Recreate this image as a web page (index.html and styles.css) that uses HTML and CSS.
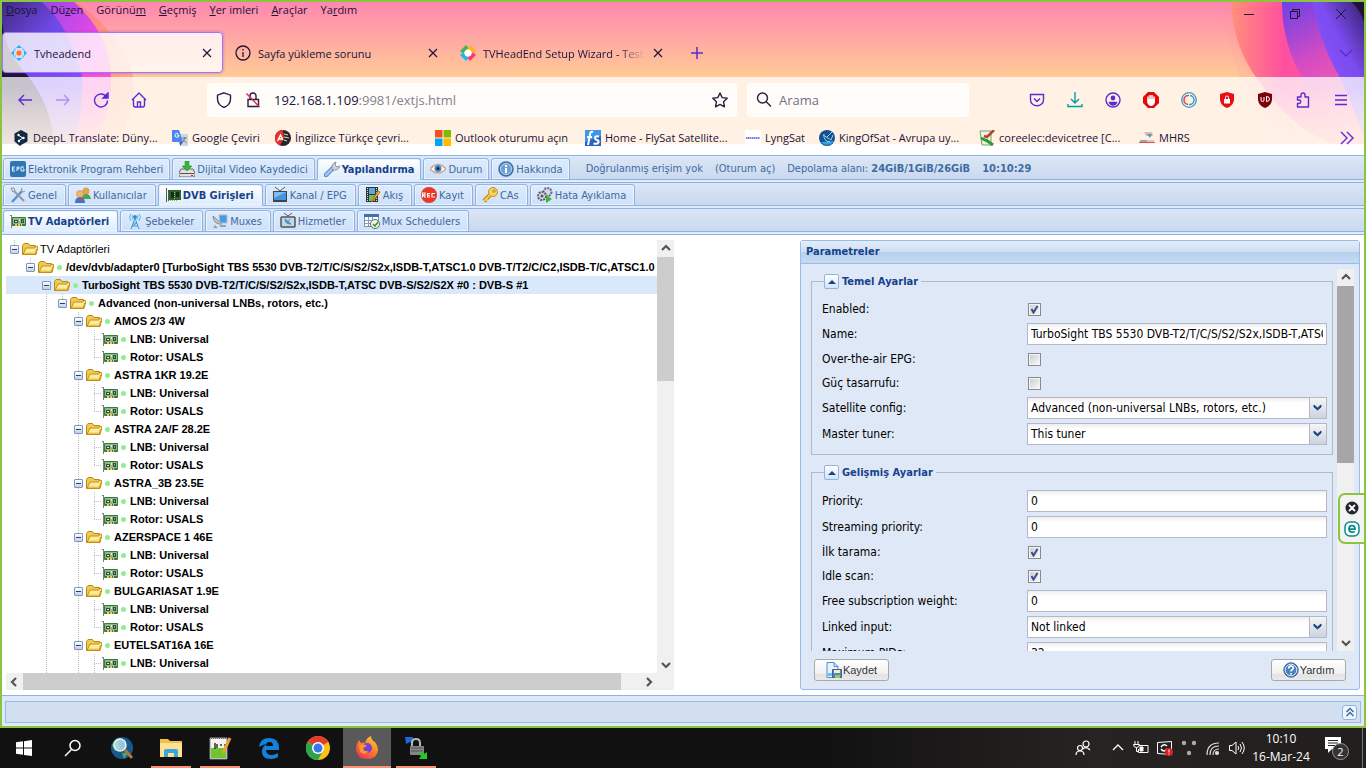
FILE: index.html
```html
<!DOCTYPE html>
<html lang="tr">
<head>
    <meta charset="UTF-8">
    <meta name="viewport" content="width=device-width, initial-scale=1.0">
    <title>Tvheadend</title>
    <link rel="stylesheet" href="styles.css">
</head>
<body>
    <!-- shared icons -->
    <svg class="sprite" aria-hidden="true">
        <symbol id="folder" viewBox="0 0 16 16">
            <path d="M.5 13.500V4.500l1.500-2h4.500l1.500 2h5.500v9z" fill="#f0c94e" stroke="#b8891c"/>
            <path d="M1 13.500L4 7h9V5.500h2.500V8l-1.500 5.500z" fill="#fdec9c" stroke="#c2901a"/>
            <path d="M2 13h11.500M14.500 8L13.500 13" stroke="#c98d12"/>
            <path d="M3 12h10" stroke="#f2c645"/>
        </symbol>
        <symbol id="card" viewBox="0 0 16 16">
            <path d="M0 2.500h2M1.500 2.500V15" stroke="#7d7d7d" fill="none"/>
            <path d="M2.500 4.500h13v8h-13z" fill="#8dbb84" stroke="#2f7f38"/>
            <path d="M4 7h4v3H4zM11 6h3v4h-3z" fill="#3f4743"/>
            <path d="M5 8.500h2M9.500 6v2M12 8h1" stroke="#e4eeda"/>
            <path d="M3 11.500h12" stroke="#3e7c40"/>
            <path d="M5 12h7" stroke="#efc65a" stroke-width="2" stroke-dasharray="2 1"/>
        </symbol>
        <symbol id="close" viewBox="0 0 12 12">
            <path d="M2 2l8 8M10 2l-8 8" fill="none" stroke="currentColor" stroke-width="1.200"/>
        </symbol>
        <symbol id="chev" viewBox="0 0 12 12">
            <path d="M2 8l4-4 4 4" fill="none" stroke="#555" stroke-width="2.200"/>
        </symbol>
    </svg>

    <div class="window">
        <header class="browser">
            <svg class="art art-left" viewBox="0 0 150 142" aria-hidden="true">
                <defs>
                    <linearGradient id="l1" x2="0.600" y2="1"><stop offset="0" stop-color="#3d2a80"/><stop offset=".4" stop-color="#7048e8"/><stop offset="1" stop-color="#8a54ff"/></linearGradient>
                    <linearGradient id="l2" x2="1" y2="1"><stop offset="0" stop-color="#6a48d8"/><stop offset=".4" stop-color="#c848e8"/><stop offset=".6" stop-color="#f84adc"/><stop offset="1" stop-color="#ff6bb0"/></linearGradient>
                    <linearGradient id="l3" x2="1" y2="0"><stop offset="0" stop-color="#ff5a90"/><stop offset=".7" stop-color="#ff8f70"/><stop offset="1" stop-color="#ff9d80"/></linearGradient>
                </defs>
                <path d="M60 0h15Q135 45 132 90Q128 125 112 142H40z" fill="url(#l3)" opacity=".7"/>
                <path d="M0 0H72Q108 32 109 75Q110 115 90 142H0z" fill="url(#l2)"/>
                <path d="M0 0H40Q70 28 80 75Q82 110 70 142H0z" fill="url(#l1)"/>
                <path d="M0 20Q4 52 26 74Q50 105 52 142H0z" fill="#20123a"/>
            </svg>
            <svg class="art art-right" viewBox="0 0 150 142" aria-hidden="true">
                <defs>
                    <linearGradient id="r1" x2="1" y2="0"><stop offset="0" stop-color="#ff907a"/><stop offset=".4" stop-color="#ff4fa0"/><stop offset="1" stop-color="#ff5ca8"/></linearGradient>
                    <linearGradient id="r2" x2="0.300" y2="1"><stop offset="0" stop-color="#6a41e8"/><stop offset=".5" stop-color="#d94cc0"/><stop offset="1" stop-color="#ff6aa8"/></linearGradient>
                    <linearGradient id="r3" x1="1" x2="0.300" y2="1"><stop offset="0" stop-color="#33206a"/><stop offset=".4" stop-color="#7c4cf0"/><stop offset="1" stop-color="#9059ff"/></linearGradient>
                    <linearGradient id="r0" x2="1" y2="0"><stop offset="0" stop-color="#ff7fae" stop-opacity="0"/><stop offset="1" stop-color="#ff6fa8"/></linearGradient>
                </defs>
                <path d="M0 0H22Q28 45 60 90L90 142H50Q20 60 0 0z" fill="url(#r0)" opacity=".4"/>
                <path d="M17 0Q19 45 44 78Q80 130 120 142H150V0z" fill="url(#r1)"/>
                <path d="M68 0Q68 45 92 82Q120 125 150 138V0z" fill="url(#r2)"/>
                <path d="M98 0Q108 45 124 72Q138 100 150 138V0z" fill="url(#r3)"/>
                <path d="M138 0Q146 8 150 20V0z" fill="#20123a"/>
            </svg>

            <nav class="menubar">
                <a href="#"><u>D</u>osya</a>
                <a href="#">Dü<u>z</u>en</a>
                <a href="#">Görünü<u>m</u></a>
                <a href="#"><u>G</u>eçmiş</a>
                <a href="#"><u>Y</u>er imleri</a>
                <a href="#"><u>A</u>raçlar</a>
                <a href="#">Ya<u>r</u>dım</a>
                <div class="win-buttons">
                    <button aria-label="Küçült"><svg width="12" height="12"><path d="M1 6.500h10" stroke="#20123a"/></svg></button>
                    <button aria-label="Geri yükle"><svg width="12" height="12" fill="none" stroke="#20123a"><path d="M1.500 3.500h7v7h-7zM3.500 3.500v-2h7v7h-2"/></svg></button>
                    <button aria-label="Kapat"><svg width="12" height="12" stroke="#20123a"><path d="M1 1l10 10M11 1L1 11"/></svg></button>
                </div>
            </nav>

            <div class="tabs">
                <div class="tab active">
                    <svg width="16" height="16" viewBox="0 0 16 16"><path d="M8 0l3 3H5zM8 16l-3-3h6zM0 8l3-3v6zM16 8l-3 3V5z" fill="#1cb5f5"/><path d="M4.500 2.500l-2 2 2 2M11.500 2.500l2 2-2 2M4.500 13.500l-2-2 2-2M11.500 13.500l2-2-2-2" fill="#5bcdf8"/><circle cx="8" cy="8" r="2.600" fill="#ff7a1a"/></svg>
                    <span class="tab-title">Tvheadend</span>
                    <button aria-label="Sekmeyi kapat"><svg width="12" height="12"><use href="#close"/></svg></button>
                </div>
                <div class="tab">
                    <svg width="16" height="16" viewBox="0 0 16 16" fill="none" stroke="#20123a" stroke-width="1.300"><circle cx="8" cy="8" r="7"/><path d="M8 7v5M8 4v1.500"/></svg>
                    <span class="tab-title">Sayfa yükleme sorunu</span>
                    <button aria-label="Sekmeyi kapat"><svg width="12" height="12"><use href="#close"/></svg></button>
                </div>
                <div class="tab">
                    <svg width="16" height="16" viewBox="0 0 16 16"><path d="M0 6l6-6 2.500 3-5.500 5.500z" fill="#48b05a"/><path d="M10 0l6 6-3 2.500L7.500 3z" fill="#ffb21c"/><path d="M0 10l3-2.500L8.500 13 6 16z" fill="#1cb8f5"/><path d="M16 10l-3-2.500L7.500 13l2.500 3z" fill="#f73a7c"/><circle cx="8" cy="8" r="3.500" fill="#fff"/></svg>
                    <span class="tab-title fade">TVHeadEnd Setup Wizard - Test</span>
                    <button aria-label="Sekmeyi kapat"><svg width="12" height="12"><use href="#close"/></svg></button>
                </div>
                <button class="new-tab" aria-label="Yeni sekme"><svg width="14" height="14" stroke="#5b2bd0" stroke-width="1.500"><path d="M7 1v12M1 7h12"/></svg></button>
                <button class="all-tabs" aria-label="Tüm sekmeler"><svg width="14" height="14" fill="none" stroke="#5b2bd0" stroke-width="1.500"><path d="M1 4l6 6 6-6"/></svg></button>
            </div>

            <div class="navbar">
                <div class="nav-buttons">
                    <button aria-label="Geri"><svg class="line" viewBox="0 0 16 16"><path d="M15 8H2M7 3L2 8l5 5"/></svg></button>
                    <button aria-label="İleri"><svg class="line dim" viewBox="0 0 16 16"><path d="M1 8h13M9 3l5 5-5 5"/></svg></button>
                    <button aria-label="Yenile"><svg class="line" viewBox="0 0 16 16"><path d="M13.500 5A6.500 6.500 0 1 0 14.500 8.500"/><path d="M15 1v5h-5z" fill="#5b2bd0"/></svg></button>
                    <button aria-label="Ana sayfa"><svg class="line" viewBox="0 0 16 16"><path d="M1 8l7-7 7 7M2.500 7v6q0 2 2 2h7q2 0 2-2V7M6.500 15v-5h3v5"/></svg></button>
                </div>
                <div class="urlbar">
                    <svg class="line ink" viewBox="0 0 16 16"><path d="M8 .8l6.500 2.400V7c0 4-3 7-6.500 8.500C4.500 14 1.500 11 1.500 7V3.200z"/></svg>
                    <svg class="line ink" viewBox="0 0 16 16"><path d="M5 7V4a3 3 0 0 1 6 0v3M3 7.500h10.500v7H3z"/><path d="M1.500 1.500l13 13.500" stroke="#e2264d"/></svg>
                    <span class="url" role="textbox" aria-label="Adres">192.168.1.109<span>:9981/extjs.html</span></span>
                    <svg class="line ink" viewBox="0 0 16 16"><path d="M8 1l2.200 4.600 5 .7-3.600 3.500.9 5L8 12.400l-4.500 2.400.9-5L.8 6.300l5-.7z" stroke-linejoin="round"/></svg>
                </div>
                <div class="searchbar">
                    <svg class="line ink" viewBox="0 0 16 16"><circle cx="6.500" cy="6" r="5"/><path d="M10 9.500l5 5"/></svg>
                    <input type="text" placeholder="Arama" aria-label="Arama">
                </div>
                <div class="ext-buttons">
                    <button aria-label="Pocket"><svg class="line" viewBox="0 0 16 16"><path d="M1.500 2.500h13V8a6.500 5.800 0 0 1-13 0zM5 6.500L8 9.500l3-3"/></svg></button>
                    <button aria-label="İndirilenler"><svg class="line teal" viewBox="0 0 16 16"><path d="M8 0v10.500M4 7l4 4 4-4M1 12v2.500h14V12"/></svg></button>
                    <button aria-label="Hesap"><svg class="line" viewBox="0 0 16 16"><circle cx="8" cy="8" r="7"/><circle cx="8" cy="6" r="1.700" fill="#5b2bd0"/><path d="M4.500 10.500h7q-1 2.500-3.500 2.500t-3.500-2.500z" fill="#5b2bd0"/></svg></button>
                    <button aria-label="Engelleyici"><svg viewBox="0 0 16 16"><path d="M5 0h6l5 5v6l-5 5H5l-5-5V5z" fill="#e20a0a"/><path d="M5 8V4.500M7 8V3M9 8V3M11 9V4.500" stroke="#fff" stroke-width="1.500"/><path d="M4.500 7h7.500v3q-1 4-4 4-2.500 0-4-4z" fill="#fff"/></svg></button>
                    <button aria-label="Eklenti"><svg viewBox="0 0 16 16" fill="none"><circle cx="8" cy="8" r="7.300" stroke="#3b9cc9" stroke-width="1.300"/><path d="M8 3.500a4.500 4.500 0 0 0-1 9" stroke="#e04440" stroke-width="1.600"/><path d="M9 3.500a4.500 4.500 0 0 1-1 9" stroke="#3b9cc9" stroke-width="1.600"/></svg></button>
                    <button aria-label="Kalkan"><svg viewBox="0 0 16 16"><path d="M8 0l7 2v6q-1 6-7 8-6-2-7-8V2z" fill="#ea0f12"/><path d="M5 7h6v4.500H5z" fill="#fff"/><path d="M6.500 7V5.500a1.500 1.500 0 0 1 3 0V7" stroke="#fff" fill="none"/></svg></button>
                    <button aria-label="uBlock"><svg viewBox="0 0 16 16"><path d="M8 0l7 2v6q-1 6-7 8-6-2-7-8V2z" fill="#7c0008"/><path d="M4 5v3q0 1.500 1.500 1.500T7 8V5M9.500 4.500v5q3 0 3-2.500t-3-2.500" stroke="#fff" fill="none"/></svg></button>
                    <button aria-label="Uzantılar"><svg class="line" viewBox="0 0 16 16"><path d="M2.500 5H6V3a2 2 0 0 1 4 0v2h3.500v10h-11v-3.500H4a1.700 1.700 0 0 0 0-3.500H2.500z" stroke-linejoin="round"/></svg></button>
                    <button aria-label="Menü"><svg class="line" viewBox="0 0 16 16"><path d="M2 3.500h12M2 8h12M2 12.500h12"/></svg></button>
                </div>
            </div>

            <div class="bookmarks">
                <a href="#"><svg viewBox="0 0 16 16"><path d="M8 0l6.500 3.500v8L8 15l-1 1-5.500-4.500v-8z" fill="#0f2b46"/><path d="M5 5l5 3-4 2.500" stroke="#fff" fill="none"/><circle cx="5.500" cy="5" r="1.200" fill="#fff"/><circle cx="10.500" cy="8" r="1.200" fill="#fff"/><circle cx="6" cy="11" r="1.200" fill="#fff"/></svg><span>DeepL Translate: Düny...</span></a>
                <a href="#"><svg viewBox="0 0 16 16"><path d="M6 4h10v12H8z" fill="#cfd6dc"/><path d="M0 0h7l4 12H1q-1 0-1-1z" fill="#4a86f0"/><path d="M7.500 12H11l-3 4z" fill="#2f5bc0"/><path d="M7 5H5M7 5a2 2 0 1 1-1-1.500" stroke="#fff" fill="none"/><path d="M10 8h5M12.500 7v1q0 3-2.500 5M11 9.500l3.500 3.500" stroke="#667f92" fill="none"/></svg><span>Google Çeviri</span></a>
                <a href="#"><svg viewBox="0 0 16 16"><circle cx="8" cy="8" r="8" fill="#262626"/><path d="M8 0a8 8 0 0 0-3 15.500L9 8z" fill="#e5322d"/><path d="M2.500 11l3-6 2.500 5M3.500 9h4" stroke="#fff" fill="none" stroke-width="1.400"/><path d="M9 4l4 1M9 7l5 1M9 10l3 1" stroke="#ddd"/></svg><span>İngilizce Türkçe çevri...</span></a>
                <a href="#"><svg viewBox="0 0 16 16"><path d="M0 0h7.500v7.500H0z" fill="#f25022"/><path d="M8.500 0H16v7.500H8.500z" fill="#7fba00"/><path d="M0 8.500h7.500V16H0z" fill="#00a4ef"/><path d="M8.500 8.500H16V16H8.500z" fill="#ffb900"/></svg><span>Outlook oturumu açın</span></a>
                <a href="#"><svg viewBox="0 0 16 16"><path d="M0 0h16v16H0z" fill="#2d62c4"/><path d="M0 0h16v6L0 12z" fill="#3c97e8"/><path d="M8 2Q5 1 5 5L3 15M2 7h5M14 6.500q-4-1-4 1.500 0 1.500 2 2t1.500 2.500q-1 2-5 1" stroke="#fff" stroke-width="2" fill="none"/></svg><span>Home - FlySat Satellite...</span></a>
                <a href="#"><svg viewBox="0 0 16 16"><path d="M0 0h16v16H0z" fill="#fff"/><path d="M1 8h14" stroke="#7676e8" stroke-width="2" stroke-dasharray="1.500 .5"/></svg><span>LyngSat</span></a>
                <a href="#"><svg viewBox="0 0 16 16"><circle cx="8" cy="8" r="8" fill="#11518f"/><path d="M2 12a8 8 0 0 0 13-1" fill="#2ba4e0"/><path d="M5 4q-1 7 6 8M4 5l8 5 2-5M8 7l5-5" stroke="#9ed2f0" fill="none"/></svg><span>KingOfSat - Avrupa uy...</span></a>
                <a href="#"><svg viewBox="0 0 16 16"><path d="M1 1h11v14H3z" fill="#eef3e2" stroke="#7b9c73"/><path d="M15 0L8 7l-3-1" stroke="#b5432c" stroke-width="2.500" fill="none"/><path d="M2 8l6 3M7 10l7 5" stroke="#2c9b32" stroke-width="3"/></svg><span>coreelec:devicetree [C...</span></a>
                <a href="#"><svg viewBox="0 0 16 16"><path d="M5 2h8l1 4H7z" fill="#e9b6b6"/><path d="M8 4h5l-2 4z" fill="#45a7a0"/><path d="M3 10h12v2H2z" fill="#e3c4c4"/><path d="M0 12h16v1H0z" fill="#d5565a"/><path d="M1 10h7v2H1z" fill="#9aa6ad"/></svg><span>MHRS</span></a>
                <button class="more" aria-label="Daha fazla yer imi"><svg class="line" viewBox="0 0 16 16"><path d="M2 2l6 6-6 6M8 2l6 6-6 6"/></svg></button>
            </div>
        </header>

        <div class="app">
            <div class="strip strip-top">
                <button class="xtab"><svg viewBox="0 0 16 16"><rect width="16" height="16" rx="2" fill="#2f74b5"/><path d="M2 6h3M2 8h2.500M2 10h3M2.500 6v4M7 10V6h2v2H7M14 6h-3v4h3V8h-1" stroke="#e8f3ff" fill="none"/></svg>Elektronik Program Rehberi</button>
                <button class="xtab"><svg viewBox="0 0 16 16"><path d="M2 8h12l2 4v4H0v-4z" fill="#e0e0e0" stroke="#666"/><path d="M1 12.500h14" stroke="#555"/><path d="M12 14.500h2" stroke="#e22"/><path d="M6 0h4v5h3L8 10 3 5h3z" fill="#35b535" stroke="#1c861c" stroke-width=".5"/></svg>Dijital Video Kaydedici</button>
                <button class="xtab active"><svg viewBox="0 0 16 16"><path d="M2 14l7-7" stroke="#4f7fc4" stroke-width="4.500" stroke-linecap="round"/><path d="M2 14l7-7" stroke="#a6c5ef" stroke-width="2.500" stroke-linecap="round"/><path d="M8 8q-1-5 4-7l-1 3 2 2 3-1q-2 5-7 4z" fill="#ccd3dc" stroke="#78828f" stroke-width=".8"/></svg>Yapılandırma</button>
                <button class="xtab"><svg viewBox="0 0 16 16"><path d="M0 8q8-9 16 0-8 8-16 0z" fill="#fff" stroke="#d3a383" stroke-width="1.500"/><circle cx="8" cy="7.500" r="3.500" fill="#4a86c8"/><circle cx="8" cy="7.500" r="1.500" fill="#152540"/></svg>Durum</button>
                <button class="xtab"><svg viewBox="0 0 16 16"><circle cx="8" cy="8" r="7" fill="#6aa0d8" stroke="#3d6ea8" stroke-width="1.500"/><circle cx="8" cy="8" r="5.500" stroke="#c9def2" fill="none" stroke-width=".8"/><path d="M8 7v5M8 4v2" stroke="#fff" stroke-width="2"/></svg>Hakkında</button>
                <div class="session">
                    <span>Doğrulanmış erişim yok</span>
                    <a href="#">(Oturum aç)</a>
                    <span>Depolama alanı: <b>24GiB/1GiB/26GiB</b></span>
                    <b>10:10:29</b>
                </div>
            </div>
            <div class="strip">
                <button class="xtab"><svg viewBox="0 0 16 16"><path d="M2 15L13 3" stroke="#5b8fd0" stroke-width="2.500"/><path d="M2 2l12 12" stroke="#929ba6" stroke-width="2"/><path d="M1 1l3 0 1 3-2 1zM12 1q-2 3 1 4l2-1" fill="#dde2e8" stroke="#8c95a0"/></svg>Genel</button>
                <button class="xtab"><svg viewBox="0 0 16 16"><circle cx="11" cy="4" r="3.500" fill="#dfa15a"/><path d="M7 12q0-5 4-5t5 5z" fill="#52a352"/><circle cx="5" cy="7" r="3.500" fill="#eeb66f" stroke="#c27e33" stroke-width=".5"/><path d="M0 16q0-6 5-6t5 6z" fill="#3d79c8"/><path d="M4 11l1 4 2-4" fill="#e33"/></svg>Kullanıcılar</button>
                <button class="xtab active"><svg viewBox="0 0 16 16"><path d="M1.500 1v14M3.500 3v11" stroke="#555"/><path d="M4 3h12v10H4z" fill="#2b612c"/><path d="M6 5h3v6H6zM11 5h3v5h-3z" fill="#152c18"/><path d="M5 13.500h8" stroke="#cfa336" stroke-dasharray="1 1"/><path d="M9.500 5v7" stroke="#8cc287" stroke-dasharray="1 1"/></svg>DVB Girişleri</button>
                <button class="xtab"><svg viewBox="0 0 16 16"><path d="M3 0l5 4 5-4" stroke="#555" fill="none"/><rect x="1" y="4" width="14" height="11" fill="#444"/><path d="M2 5h12v8H2z" fill="#4396e0"/><path d="M2 5h12L2 11z" fill="#80bdf3"/></svg>Kanal / EPG</button>
                <button class="xtab"><svg viewBox="0 0 16 16"><path d="M1 0h12v15H1z" fill="#333"/><path d="M4 1h6v6H4z" fill="#5fa7dc"/><path d="M4 8h6v6H4z" fill="#73ba66"/><path d="M2.500 1v14M11.500 1v14" stroke="#ddd" stroke-dasharray="1 1"/><path d="M15 5l-6 8-2 2 1-3 5-8z" fill="#f2b53d" stroke="#a8701c"/></svg>Akış</button>
                <button class="xtab"><svg viewBox="0 0 16 16"><circle cx="8" cy="8" r="8" fill="#e93823"/><path d="M1.500 10.500V6H4v2H2l2.500 2.500M9 6.500H6.500v3.500H9M6.500 8.200H9M14 6.500h-3v3.500h3" stroke="#fff" fill="none" stroke-width="1.100"/></svg>Kayıt</button>
                <button class="xtab"><svg viewBox="0 0 16 16"><path d="M8 8L2 14" stroke="#b17b12" stroke-width="4"/><circle cx="11" cy="5" r="4.500" fill="#f9d55c" stroke="#c3901d"/><path d="M9 7l-7 7M4 12l2 2" stroke="#f6cd4f" stroke-width="2"/><circle cx="12" cy="4" r="1.200" fill="#fff" stroke="#b17b12"/></svg>CAs</button>
                <button class="xtab"><svg viewBox="0 0 16 16"><circle cx="10.500" cy="5" r="4" fill="#d6d6e4" stroke="#686b80" stroke-width="2" stroke-dasharray="2 1"/><circle cx="5" cy="9" r="4" fill="#d6d6e4" stroke="#585b70" stroke-width="2" stroke-dasharray="2 1"/><circle cx="5" cy="9" r="1.500" fill="#555"/><path d="M9 8l6 4-6 4z" fill="#34b82e"/></svg>Hata Ayıklama</button>
            </div>
            <div class="strip">
                <button class="xtab active"><svg viewBox="0 0 16 16"><use href="#card"/></svg>TV Adaptörleri</button>
                <button class="xtab"><svg viewBox="0 0 16 16" fill="none" stroke="#3a9bd6"><path d="M4 16L8 5l4 11M5 13h6M6 10h4M5 13l5-3"/><path d="M4 1Q1 4 4 8M12 1q3 3 0 7M6 2Q4 4 6 6.500M10 2q2 2 0 4.500" stroke="#57b6e6"/><circle cx="8" cy="4" r="1.500" fill="#2b80bd"/></svg>Şebekeler</button>
                <button class="xtab"><svg viewBox="0 0 16 16"><path d="M1 3Q2 12 10 11z" fill="#c0c7cf" stroke="#7f8790"/><path d="M7 2h8v8H8z" fill="#3f9ce8" stroke="#bbb"/><path d="M3 12l-2 3h5zM8 12h6v2H8z" fill="#98a1ab"/></svg>Muxes</button>
                <button class="xtab"><svg viewBox="0 0 16 16"><path d="M4 0l4 3 4-3" fill="none" stroke="#555"/><rect x="1" y="4" width="14" height="10" rx="1" fill="#cbd5de" stroke="#4b555e" stroke-width="1.500"/><path d="M5 6q0 5 6 5zM8 9l2-3" fill="#3f8fce" stroke="#3f8fce"/></svg>Hizmetler</button>
                <button class="xtab"><svg viewBox="0 0 16 16"><path d="M.5 1.500h14v12H.5z" fill="#fff" stroke="#7890b0"/><path d="M0 1h15v3H0z" fill="#3972b8"/><path d="M1 7.500h13M1 10.500h13M4.500 4v9M8.500 4v9" stroke="#8a9cb5"/><circle cx="11" cy="11" r="4.500" fill="#f0f7ee" stroke="#667"/><path d="M9 11l2 2 3-4" stroke="#28a028" stroke-width="1.500" fill="none"/></svg>Mux Schedulers</button>
            </div>

            <main class="content">
                <section class="tree-panel">
                    <div class="tree-view">
                        <ul class="tree">
                            <li class="last">
                                <div class="row root"><button class="minus" aria-label="Daralt"></button><svg><use href="#folder"/></svg>TV Adaptörleri</div>
                                <ul>
                                    <li class="last">
                                        <div class="row"><button class="minus" aria-label="Daralt"></button><svg><use href="#folder"/></svg><i></i>/dev/dvb/adapter0 [TurboSight TBS 5530 DVB-T2/T/C/S/S2/S2x,ISDB-T,ATSC1.0 DVB-T/T2/C/C2,ISDB-T/C,ATSC1.0 #0]</div>
                                        <ul>
                                            <li>
                                                <div class="row selected"><button class="minus" aria-label="Daralt"></button><svg><use href="#folder"/></svg><i></i>TurboSight TBS 5530 DVB-T2/T/C/S/S2/S2x,ISDB-T,ATSC DVB-S/S2/S2X #0 : DVB-S #1</div>
                                                <ul>
                                                    <li class="last">
                                                        <div class="row"><button class="minus" aria-label="Daralt"></button><svg><use href="#folder"/></svg><i></i>Advanced (non-universal LNBs, rotors, etc.)</div>
                                                        <ul id="satellites"></ul>
                                                    </li>
                                                </ul>
                                            </li>
                                        </ul>
                                    </li>
                                </ul>
                            </li>
                        </ul>
                    </div>
                    <div class="vscroll" aria-hidden="true">
                        <svg width="12" height="12"><use href="#chev"/></svg>
                        <div class="track"><div class="thumb"></div></div>
                        <svg class="down" width="12" height="12"><use href="#chev"/></svg>
                    </div>
                    <div class="hscroll" aria-hidden="true">
                        <svg class="left" width="12" height="12"><use href="#chev"/></svg>
                        <div class="track"><div class="thumb"></div></div>
                        <svg class="right" width="12" height="12"><use href="#chev"/></svg>
                    </div>
                    <div class="corner"></div>
                </section>

                <section class="params">
                    <h2>Parametreler</h2>
                    <div class="params-body">
                        <form class="fields">
                            <fieldset>
                                <legend><button type="button" class="collapse" aria-label="Daralt"></button>Temel Ayarlar</legend>
                                <div class="field check"><label for="enabled">Enabled:</label><input type="checkbox" id="enabled" checked></div>
                                <div class="field"><label for="name">Name:</label><input type="text" id="name" value="TurboSight TBS 5530 DVB-T2/T/C/S/S2/S2x,ISDB-T,ATSC DVB-S/S2/S2X #0"></div>
                                <div class="field check"><label for="epg">Over-the-air EPG:</label><input type="checkbox" id="epg"></div>
                                <div class="field check"><label for="power">Güç tasarrufu:</label><input type="checkbox" id="power"></div>
                                <div class="field"><label for="satconf">Satellite config:</label><select id="satconf"><option>Advanced (non-universal LNBs, rotors, etc.)</option></select></div>
                                <div class="field"><label for="master">Master tuner:</label><select id="master"><option>This tuner</option></select></div>
                            </fieldset>
                            <fieldset>
                                <legend><button type="button" class="collapse" aria-label="Daralt"></button>Gelişmiş Ayarlar</legend>
                                <div class="field"><label for="prio">Priority:</label><input type="text" id="prio" value="0"></div>
                                <div class="field"><label for="sprio">Streaming priority:</label><input type="text" id="sprio" value="0"></div>
                                <div class="field check"><label for="initscan">İlk tarama:</label><input type="checkbox" id="initscan" checked></div>
                                <div class="field check"><label for="idlescan">Idle scan:</label><input type="checkbox" id="idlescan" checked></div>
                                <div class="field"><label for="weight">Free subscription weight:</label><input type="text" id="weight" value="0"></div>
                                <div class="field"><label for="linked">Linked input:</label><select id="linked"><option>Not linked</option></select></div>
                                <div class="field"><label for="pids">Maximum PIDs:</label><input type="text" id="pids" value="32"></div>
                            </fieldset>
                        </form>
                        <div class="vscroll dark" aria-hidden="true">
                            <svg width="12" height="12"><use href="#chev"/></svg>
                            <div class="track"><div class="thumb"></div></div>
                            <svg class="down" width="12" height="12"><use href="#chev"/></svg>
                        </div>
                    </div>
                    <footer class="params-foot">
                        <button class="btn"><svg width="16" height="16" viewBox="0 0 16 16"><path d="M1 .5h7l4 4v11H1z" fill="#e8f2fd" stroke="#4f8bd0"/><path d="M8 .5v4h4" fill="none" stroke="#4f8bd0"/><path d="M2 11h4v3H2z" fill="#6fc0ef"/><path d="M6.500 7.500h9v8h-9z" fill="#5a83c4" stroke="#3b5f9c"/><path d="M8 8h6v3H8z" fill="#f5efb0"/><path d="M9 13h5v3H9z" fill="#8fd05c"/></svg>Kaydet</button>
                        <button class="btn"><svg width="16" height="16" viewBox="0 0 16 16"><circle cx="8" cy="8" r="7.200" fill="#4f80be" stroke="#35629e"/><circle cx="8" cy="8" r="5.800" fill="none" stroke="#d6e4f4"/><path d="M5.700 6.500q0-2.500 2.300-2.500t2.300 2q0 1-1.200 1.700T8 9.500M8 11v1.500" fill="none" stroke="#fff" stroke-width="1.600"/></svg>Yardım</button>
                    </footer>
                </section>
            </main>

            <div class="statusbar">
                <div class="status-inner"><button aria-label="Genişlet"><svg width="10" height="10" fill="none" stroke="#3b6aab" stroke-width="1.500"><path d="M1.500 5L5 1.500 8.500 5M1.500 9L5 5.500 8.500 9"/></svg></button></div>
            </div>
        </div>
    </div>

    <div class="widget">
        <svg width="14" height="14" viewBox="0 0 14 14"><circle cx="7" cy="7" r="6.500" fill="#22252b"/><path d="M4 4l6 6M10 4l-6 6" stroke="#fff" stroke-width="1.800"/></svg>
        <svg width="16" height="16" viewBox="0 0 16 16"><rect x="1" y="1" width="14" height="14" rx="5" fill="#fff" stroke="#0b8a8f" stroke-width="1.500"/><path d="M4.500 8.200h6.500q0-3.500-3-3.500T5 8q0 3.200 3.200 3.200 1.500 0 2.500-.8" fill="none" stroke="#0b8a8f" stroke-width="1.800"/></svg>
    </div>

    <div class="taskbar">
        <button class="task" aria-label="Başlat"><svg width="16" height="16" fill="#fff"><path d="M0 2.300l7-1v6.300H0zM8 1.200L16 0v7.600H8zM0 8.500h7v6.300l-7-1zM8 8.500h8V16l-8-1.100z"/></svg></button>
        <button class="task" aria-label="Ara"><svg width="18" height="18" fill="none" stroke="#fff" stroke-width="1.500"><circle cx="11" cy="6.500" r="5"/><path d="M7.500 10.500L1 17"/></svg></button>
        <button class="task" aria-label="Tarayıcı"><svg width="24" height="24"><circle cx="12" cy="12" r="11" fill="#17598c"/><path d="M2 9q4-8 9-7l-3 6 2 4-5 3zM12 17l7-1-5 7z" fill="#4ba567"/><circle cx="10" cy="9" r="6" fill="#c9e8f8" fill-opacity=".75" stroke="#e9f1f5" stroke-width="1.500"/><path d="M15 14l7 8" stroke="#b5753a" stroke-width="3"/></svg></button>
        <button class="task open" aria-label="Dosya Gezgini"><svg width="22" height="20"><path d="M0 1h8l2 2h12v16H0z" fill="#f0c04e"/><path d="M0 5h22v14H0z" fill="#fde291"/><path d="M4 19v-6q0-2 2-2h10q2 0 2 2v6h-4v-4H8v4z" fill="#39a6df"/></svg></button>
        <button class="task open" aria-label="Notepad++"><svg width="24" height="24"><path d="M2 2h17v21H2z" fill="#f2f4ee" stroke="#889"/><path d="M3 12h15v10H3z" fill="#6fc62c"/><path d="M3 2h15" stroke="#666" stroke-width="2" stroke-dasharray="1 1"/><path d="M7 7v6M9 8v4M12 9h2M16 9h2" stroke="#333" stroke-width="1.500"/><path d="M22 2l-7 15" stroke="#e6a13a" stroke-width="3"/></svg></button>
        <button class="task" aria-label="Edge"><svg width="22" height="22"><path d="M1 10Q2 1 11 1q10 0 10 10v2H8q0 5 6 5 3 0 6-2v4q-3 2-7 2-10 0-9-9 1-4 5-6-3 0-8 3zM8 9h7q0-4-3.500-4T8 9z" fill="#1380db"/></svg></button>
        <button class="task" aria-label="Chrome"><svg width="24" height="24"><circle cx="12" cy="12" r="12" fill="#fbc116"/><path d="M12 12L1.600 6A12 12 0 0 1 22.400 6z" fill="#e33b2e"/><path d="M1.600 6A12 12 0 0 0 12 24l5-9-5-3z" fill="#2da44f"/><circle cx="12" cy="12" r="6" fill="#fff"/><circle cx="12" cy="12" r="4.500" fill="#3978e8"/></svg></button>
        <button class="task open current" aria-label="Firefox"><svg width="24" height="24"><defs><linearGradient id="ff" x1="1" x2="0.300" y2="1"><stop offset="0" stop-color="#ffe044"/><stop offset=".5" stop-color="#ff8425"/><stop offset="1" stop-color="#f0365a"/></linearGradient></defs><path d="M4 4l2 3q2-1 4 0 1-5 6-7 0 4 4 6 3 4 3 8-1 9-11 9Q2 23 1 13q0-5 3-9z" fill="url(#ff)"/><circle cx="12" cy="12" r="5" fill="#7541d8"/><path d="M4 9q5-2 8 1l-4 2q1 4 6 3-4 5-9 1z" fill="#ff9a25"/></svg></button>
        <button class="task open" aria-label="WinSCP"><svg width="24" height="24"><path d="M1 1h8v8L6 6 2 8z" fill="#1d65d8"/><rect x="6" y="10" width="14" height="9" rx="1" fill="#868686"/><path d="M8 10V7q0-4 4-4t4 4v3" fill="none" stroke="#b5b5b5" stroke-width="2"/><path d="M7 12h12M7 15h12" stroke="#555"/><path d="M23 23h-8l2-3-3-3 3-2 3 3 3-2z" fill="#2cc42c"/></svg></button>
        <div class="tray">
            <svg width="16" height="16" fill="none" stroke="#fff" stroke-width="1.200"><circle cx="11" cy="4" r="3"/><path d="M8 9q3-3 7 1"/><circle cx="5" cy="8" r="2.500"/><path d="M1 15q0-4 4-4t4 4"/></svg>
            <svg class="up" width="14" height="14" fill="none" stroke="#fff" stroke-width="1.300"><path d="M2 9l5-5 5 5"/></svg>
            <svg width="16" height="16" fill="none" stroke="#fff"><path d="M6 5.500h9v7H5.500V9M2 1v3M5 1v3M.5 4.500h6q0 3-3 3t-3-3M3.500 7.500v4H6"/><path d="M7 7h3v4H7z" fill="#fff"/></svg>
            <svg width="16" height="16" fill="none" stroke="#fff"><path d="M.5 2.500l14-1v13l-14-1z"/><path d="M4 7q3-4 6-1M10 9q-3 4-6 0" stroke-width="1.500"/><circle cx="12" cy="12" r="4" fill="#d91f26" stroke="none"/><path d="M12 9.500v3M12 13.500v1"/></svg>
            <svg width="16" height="16" fill="#aaa"><circle cx="3" cy="3" r="2.200"/><circle cx="13" cy="3" r="2.200"/><circle cx="8" cy="13" r="2.200"/></svg>
            <svg width="16" height="16" fill="none" stroke="#ddd" stroke-width="1.200"><path d="M2 15Q2 3 14 3M5 15q0-9 9-9M8 15q0-6 6-6"/><circle cx="12" cy="13" r="1.500" fill="#ddd"/></svg>
            <svg width="16" height="16" fill="none" stroke="#fff"><path d="M.5 5.500H3L7 2v12l-4-3.500H.5zM9 6q1.500 2 0 4M11 4q3 4 0 8M13 2q4.500 6 0 12"/></svg>
            <div class="clock"><span>10:10</span><span>16-Mar-24</span></div>
            <div class="notify"><svg width="16" height="16" viewBox="0 0 16 16"><path d="M0 0h16v12H7l-4 4v-4H0z" fill="#fff"/><path d="M3 3.500h10M3 6h10M3 8.500h7" stroke="#222"/></svg><span>2</span></div>
            <div class="desktop"></div>
        </div>
    </div>

    <script>
        const satellites = ['AMOS 2/3 4W', 'ASTRA 1KR 19.2E', 'ASTRA 2A/F 28.2E', 'ASTRA_3B 23.5E', 'AZERSPACE 1 46E', 'BULGARIASAT 1.9E', 'EUTELSAT16A 16E'];

        const leaf = (text, cls) => `<li class="${cls}"><div class="row"><span class="elbow"></span><svg><use href="#card"/></svg><i></i>${text}</div></li>`;

        document.getElementById('satellites').innerHTML = satellites.map(name => `
            <li>
                <div class="row"><button class="minus" aria-label="Daralt"></button><svg><use href="#folder"/></svg><i></i>${name}</div>
                <ul>${leaf('LNB: Universal', '')}${leaf('Rotor: USALS', 'last')}</ul>
            </li>`).join('');
    </script>
</body>
</html>
```
FILE: styles.css
```css
* { box-sizing: border-box; }

body {
    margin: 0;
    height: 100vh;
    display: flex;
    flex-direction: column;
    overflow: hidden;
    font-family: "Open Sans", "Noto Sans", sans-serif;
    font-size: 11px;
    color: #20123a;
    background: #fff;
}

button {
    border: 0;
    padding: 0;
    background: none;
    font: inherit;
    color: inherit;
    display: inline-flex;
    align-items: center;
    justify-content: center;
}

a { color: inherit; text-decoration: none; }
svg { flex: none; display: block; }
.sprite { position: absolute; width: 0; height: 0; }

.window {
    flex: 1;
    min-height: 0;
    display: flex;
    flex-direction: column;
    border: 2px solid #8bc53f;
}

/* browser chrome */
.browser {
    position: relative;
    background: linear-gradient(to bottom, #ff87b0 0, #ffcb96 75px);
}
.art {
    position: absolute;
    top: 0;
    width: 150px;
    height: 142px;
    mask-image: linear-gradient(to bottom, #000 85px, rgba(0, 0, 0, 0.25));
}
.art-left { left: 0; }
.art-right { right: 0; }
.menubar, .tabs, .navbar, .bookmarks { position: relative; display: flex; align-items: center; }

.menubar { height: 30px; padding-left: 4px; gap: 13px; align-items: flex-start; line-height: 16px; }
.win-buttons { margin-left: auto; display: flex; }
.win-buttons button { width: 46px; height: 24px; }

.tabs { height: 45px; align-items: flex-start; }
.tab {
    width: 221px;
    height: 41px;
    margin-right: 4px;
    padding: 0 9px 0 8px;
    display: flex;
    align-items: center;
    gap: 7px;
    border-radius: 4px;
}
.tab.active {
    background: rgba(255, 255, 255, 0.8);
    border: 1px solid #a173ff;
    box-shadow: 0 0 3px rgba(120, 60, 200, 0.5);
}
.tab-title { flex: 1; padding-top: 2px; overflow: hidden; white-space: nowrap; }
.fade { mask-image: linear-gradient(to left, transparent, #000 26px); }
.new-tab, .all-tabs { width: 36px; height: 41px; }
.new-tab { margin-left: 2px; }
.all-tabs { margin-left: auto; }

.navbar { height: 46px; padding: 0 4px; background: rgba(255, 255, 255, 0.75); }
.nav-buttons, .ext-buttons { display: flex; }
.nav-buttons button, .ext-buttons button { width: 38px; height: 34px; }
.navbar svg, .bookmarks svg { width: 16px; height: 16px; }
.line { fill: none; stroke: #5b2bd0; stroke-width: 1.4; }
.ink { stroke: #2b1d45; }
.teal { stroke: #00a0a4; }
.dim { opacity: 0.4; }
.urlbar, .searchbar {
    height: 34px;
    display: flex;
    align-items: center;
    background: rgba(255, 255, 255, 0.8);
    border-radius: 4px;
    font-size: 13px;
}
.urlbar { flex: 1; margin-left: 49px; padding: 0 9px; gap: 13px; }
.url { flex: 1; }
.url span { color: #857f90; }
.searchbar { width: 222px; margin: 0 49px 0 10px; padding: 0 9px; gap: 5px; }
.searchbar input {
    flex: 1;
    min-width: 0;
    border: 0;
    background: none;
    font: inherit;
    outline: 0;
}
.searchbar input::placeholder { color: #756f82; }

.bookmarks {
    height: 21px;
    padding: 7px 9px 0 11px;
    display: grid;
    align-items: start;
    grid-template-columns: 159px 103px 160px 150px 160px 74px 160px 160px 1fr 16px;
    background: rgba(255, 255, 255, 0.75);
}
.bookmarks a { display: flex; gap: 4px; white-space: nowrap; }
.bookmarks a span { line-height: 16px; }

/* web app */
.app {
    flex: 1;
    min-height: 0;
    padding-top: 11px;
    display: flex;
    flex-direction: column;
    background: #fff;
    font-family: "DejaVu Sans Condensed", "DejaVu Sans", Tahoma, sans-serif;
    font-size: 11px;
    color: #000;
}
.strip {
    display: flex;
    height: 26px;
    padding: 1px 1px 0;
    gap: 2px;
    border-top: 1px solid #8db2e3;
    background: linear-gradient(to bottom, #dbe6f5, #c9d9ee 22px, #8db2e3 22px, #8db2e3 23px, #deecfd 23px);
}
.strip-top { height: 27px; padding-top: 2px; background-position: 0 1px; }
.xtab {
    height: 22px;
    padding: 0 8px 0 6px;
    gap: 2px;
    white-space: nowrap;
    color: #416aa3;
    border: 1px solid #8db2e3;
    border-radius: 3px 3px 0 0;
    background: linear-gradient(to bottom, #deecfd, #cfe0f7);
    box-shadow: inset 0 0 0 1px #eaf3ff;
}
.strip-top .xtab { padding-right: 6px; }
.xtab svg { width: 16px; height: 16px; }
.xtab.active {
    font-weight: bold;
    color: #15428b;
    border-bottom-color: #deecfd;
    background: linear-gradient(to bottom, #fff, #deecfd);
}
.session {
    display: flex;
    gap: 12px;
    padding: 0 14px;
    line-height: 22px;
    white-space: nowrap;
    color: #416aa3;
}

.content {
    flex: 1;
    min-height: 0;
    padding: 5px 4px;
    display: grid;
    grid-template: minmax(0, 1fr) / 668fr 560fr;
    column-gap: 126px;
    border-top: 1px solid #8db2e3;
}

.tree-panel {
    display: grid;
    grid-template: minmax(0, 1fr) 17px / minmax(0, 1fr) 17px;
}
.tree-view {
    overflow: hidden;
    font: bold 11px "Liberation Sans", Arial, sans-serif;
}
.tree ul, .tree { list-style: none; margin: 0; padding: 0; }
.tree ul { padding-left: 16px; }
.tree li {
    background: repeating-linear-gradient(to bottom, #c0c0c0 0, #c0c0c0 1px, transparent 1px, transparent 2px) 8px 0 / 1px 100% no-repeat;
}
.tree li.last { background-size: 1px 9px; }
.row { display: flex; align-items: center; height: 18px; white-space: nowrap; }
.row svg { width: 16px; height: 16px; }
.row i {
    flex: none;
    width: 5px;
    height: 5px;
    margin: 0 4px 0 3px;
    border-radius: 50%;
    background: #90ee90;
}
.root { font-weight: normal; }
.root svg { margin-right: 2px; }
.selected { margin-left: -32px; padding-left: 32px; background: #d9e8fb; }
.minus {
    flex: none;
    width: 9px;
    height: 9px;
    margin: 0 3px 0 4px;
    border: 1px solid #7b98c0;
    border-radius: 1px;
    background: linear-gradient(#27406e, #27406e) center / 5px 1px no-repeat, linear-gradient(#fff, #c3cfe0);
}
.elbow {
    flex: none;
    width: 16px;
    height: 1px;
    background: repeating-linear-gradient(to right, #c0c0c0 0, #c0c0c0 1px, transparent 1px, transparent 2px) 8px 0 no-repeat;
}

.vscroll, .hscroll { display: flex; align-items: center; background: #f0f0f0; }
.vscroll { flex-direction: column; width: 17px; padding: 2px 0; }
.hscroll { padding: 0 2px; }
.track { flex: 1; align-self: stretch; }
.vscroll .track { margin: 3px 0; }
.hscroll .track { margin: 0 3px; }
.thumb { background: #cdcdcd; }
.vscroll .thumb { height: 31%; }
.hscroll .thumb { width: 97%; height: 100%; }
.down { transform: rotate(180deg); }
.left { transform: rotate(-90deg); }
.right { transform: rotate(90deg); }
.dark .thumb { height: 51%; background: #a6a6a6; }
.corner { background: #f0f0f0; }

.params {
    display: flex;
    flex-direction: column;
    min-width: 0;
    border: 1px solid #99bbe8;
    border-radius: 3px;
    background: #dfe8f6;
}
.params h2 {
    margin: 0;
    padding-left: 5px;
    font-size: 11px;
    line-height: 22px;
    color: #15428b;
    border-bottom: 1px solid #99bbe8;
    background: linear-gradient(to bottom, #e3edf9, #cfdef2 11px, #b5cfee 11px, #c6d9f2);
}
.params-body { flex: 1; min-height: 0; display: flex; padding: 5px 5px 0 10px; }
.fields { flex: 1; min-width: 0; overflow: hidden; padding: 5px 4px 0 0; font-size: 12px; }
.fields fieldset {
    min-width: 0;
    margin: 0 0 10px;
    padding: 10px 5px 5px 10px;
    border: 1px solid #b5b8c8;
}
.fields legend {
    display: flex;
    align-items: center;
    gap: 3px;
    height: 15px;
    margin-left: 2px;
    padding: 0 3px 0 0;
    font-size: 11px;
    font-weight: bold;
    color: #15428b;
}
.collapse {
    width: 15px;
    height: 15px;
    border: 1px solid #8fb4e3;
    border-radius: 2px;
    background: linear-gradient(#fff, #d3e3f7);
}
.collapse::before { content: ""; border: 4px solid transparent; border-top: 0; border-bottom-color: #15428b; }
.field { display: flex; height: 22px; margin-bottom: 4px; }
.field label { flex: none; width: 205px; line-height: 22px; }
.check { height: 20px; align-items: center; }
.field input[type="text"], .field select {
    flex: 1;
    min-width: 0;
    height: 22px;
    padding: 0 3px;
    font: inherit;
    color: #000;
    border: 1px solid #b5b8c8;
    border-radius: 0;
    background: linear-gradient(to bottom, #eee, #fff 5px);
}
.field select {
    appearance: none;
    background:
        url("data:image/svg+xml,%3Csvg xmlns='http://www.w3.org/2000/svg' width='17' height='20'%3E%3Cpath d='M0 0h1v20H0z' fill='%23b5b8c8'/%3E%3Cpath d='M5 7l3.500 3L12 7v2l-3.500 3L5 9z' fill='%23204584' stroke='%23204584'/%3E%3C/svg%3E") right / 17px 20px no-repeat,
        linear-gradient(#f5f5f5, #ccd3df) right / 17px 20px no-repeat,
        linear-gradient(to bottom, #eee, #fff 5px);
}
.check input {
    appearance: none;
    width: 13px;
    height: 13px;
    margin: 0 0 0 1px;
    border: 1px solid #8a8a8a;
    background: linear-gradient(135deg, #c8ccd2, #fafafa);
    box-shadow: inset 0 0 0 1px #f5f5f5;
}
.check input:checked {
    background: url("data:image/svg+xml,%3Csvg xmlns='http://www.w3.org/2000/svg' width='11' height='11'%3E%3Cpath d='M2.500 5l2 3.500L8.500 2' fill='none' stroke='%23304f94' stroke-width='2'/%3E%3C/svg%3E"), linear-gradient(135deg, #c8ccd2, #fafafa);
}
.params-foot { display: flex; justify-content: space-between; padding: 8px 13px; }
.btn {
    width: 75px;
    height: 22px;
    gap: 1px;
    color: #333;
    border: 1px solid #a9a9a9;
    border-radius: 3px;
    background: linear-gradient(to bottom, #fff, #f0f0f0 14px, #e2e2e2 14px, #eaeaea);
    font-family: "Liberation Sans", Arial, sans-serif;
}

.statusbar { height: 31px; padding: 5px 3px 4px; border-top: 1px solid #8db2e3; background: #dfe8f6; }
.status-inner {
    height: 22px;
    display: flex;
    align-items: center;
    justify-content: flex-end;
    padding-right: 3px;
    border: 1px solid #99bbe8;
    background: #d2dff0;
}
.status-inner button {
    width: 15px;
    height: 15px;
    border: 1px solid #8fb4e3;
    border-radius: 3px;
    background: #eef5fd;
}

/* floating extension handle over the page edge */
.widget {
    position: absolute;
    right: 0;
    top: 493px;
    width: 28px;
    height: 51px;
    display: flex;
    flex-direction: column;
    align-items: center;
    justify-content: center;
    gap: 6px;
    border: 2px solid #8bc53f;
    border-radius: 7px 0 0 7px;
    background: #f3f3f3;
}

/* taskbar */
.taskbar {
    height: 40px;
    display: flex;
    color: #fff;
    background: linear-gradient(to right, #111 0, #111 60%, #272322 80%, #211e1d);
}
.task { width: 48px; height: 40px; margin-right: 1px; }
.open { background: linear-gradient(#ff8f73, #ff8f73) bottom / 40px 2px no-repeat; }
.current { background: linear-gradient(#ff8f73, #ff8f73) bottom / 48px 2px no-repeat, #595959; }
.tray { margin-left: auto; display: flex; align-items: center; gap: 8px; }
.up { margin-left: 12px; }
.clock { display: flex; flex-direction: column; align-items: center; line-height: 18px; width: 56px; white-space: nowrap; font-size: 12px; }
.notify { display: flex; width: 29px; margin-left: 8px; }
.notify span {
    width: 17px;
    height: 17px;
    margin: 6px 0 0 -9px;
    line-height: 15px;
    text-align: center;
    border: 1px solid #999;
    border-radius: 50%;
    background: #333;
}
.desktop { width: 4px; height: 40px; border-left: 1px solid #777; }
```
